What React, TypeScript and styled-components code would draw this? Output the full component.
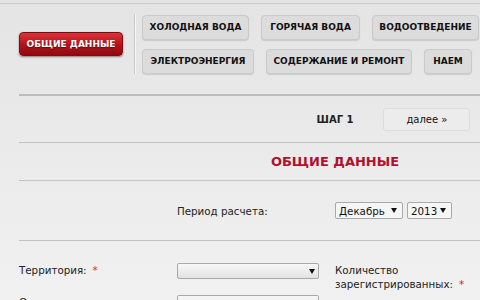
import React from 'react';
import styled, { createGlobalStyle } from 'styled-components';

const GlobalStyle = createGlobalStyle`
  html, body {
    margin: 0;
    padding: 0;
    overflow: hidden;
  }
  body {
    padding-top: 3px;
    background: linear-gradient(#e4e4e4, #f1f1f1 300px);
    font-family: "DejaVu Sans", Verdana, sans-serif;
    color: #222;
  }
`;

const Page = styled.div`
  border-top: 1px solid #cbcbcb;
  width: 651px;
`;

const Header = styled.header`
  display: flex;
  align-items: center;
  padding: 10px 0 20px 19px;
`;

const MainButton = styled.div`
  width: 104px;
  height: 24px;
  box-sizing: border-box;
  display: flex;
  align-items: center;
  justify-content: center;
  border: 1px solid #86090f;
  border-radius: 4px;
  background: linear-gradient(#d9343a, #b3121a 55%, #8e0a10);
  box-shadow: 0 1px 2px rgba(0, 0, 0, 0.45);
  color: #fff;
  font-size: 9px;
  font-weight: bold;
  text-shadow: 0 1px 1px rgba(0, 0, 0, 0.4);
`;

const Separator = styled.div`
  width: 1px;
  height: 60px;
  margin: 0 7px 0 11px;
  background: #c9c9c9;
  box-shadow: 1px 0 0 #f6f6f6;
`;

const Tabs = styled.div`
  display: flex;
  flex-direction: column;
  gap: 9px;
`;

const TabRow = styled.div`
  display: flex;
  gap: 12px;
`;

const Tab = styled.div<{ $w: number }>`
  width: ${(p) => p.$w}px;
  height: 25px;
  box-sizing: border-box;
  display: flex;
  align-items: center;
  justify-content: center;
  border: 1px solid #cacaca;
  border-radius: 4px;
  background: #dcdcdc;
  box-shadow: 0 1px 1px rgba(0, 0, 0, 0.12);
  color: #111;
  font-size: 9px;
  font-weight: bold;
  white-space: nowrap;
`;

const Content = styled.main`
  margin-left: 19px;
  border-top: 2px solid #bdbdbd;
`;

const StepRow = styled.div`
  display: grid;
  grid-template-columns: 1fr auto 1fr;
  align-items: center;
  height: 46px;
  border-bottom: 1px solid #c2c2c2;
`;

const StepLabel = styled.div`
  grid-column: 2;
  font-size: 10px;
  font-weight: bold;
  color: #222;
`;

const NextButton = styled.div`
  margin-left: 30px;
  width: 87px;
  height: 23px;
  box-sizing: border-box;
  display: flex;
  align-items: center;
  justify-content: center;
  border: 1px solid #dcdcdc;
  border-radius: 3px;
  background: #ececec;
  font-size: 10px;
  color: #111;
`;

const Title = styled.h1`
  margin: 0;
  height: 37px;
  display: flex;
  align-items: center;
  justify-content: center;
  border-bottom: 1px solid #c2c2c2;
  color: #b0112d;
  font-size: 13px;
  font-weight: bold;
`;

const FormRow = styled.div<{ $h?: number; $top?: number; $line?: boolean }>`
  display: grid;
  grid-template-columns: repeat(4, 158px);
  align-items: ${(p) => (p.$top !== undefined ? 'start' : 'center')};
  height: ${(p) => p.$h ?? 60}px;
  padding-top: ${(p) => p.$top ?? 0}px;
  box-sizing: border-box;
  border-bottom: ${(p) => (p.$line ? '1px solid #c2c2c2' : 'none')};
`;

const Label = styled.div<{ $col?: number }>`
  grid-column: ${(p) => p.$col ?? 'auto'};
  font-size: 10.3px;
  line-height: 14px;
  color: #222;
`;

const Req = styled.span`
  color: #e8121f;
  margin-left: 6px;
`;

const Selects = styled.div`
  display: flex;
  gap: 4px;
`;

const Select = styled.div<{ $w: number; $plain?: boolean }>`
  width: ${(p) => p.$w}px;
  height: ${(p) => (p.$plain ? 17 : 16)}px;
  box-sizing: border-box;
  display: flex;
  align-items: center;
  justify-content: space-between;
  padding: 0 ${(p) => (p.$plain ? 5 : 3)}px 0 3px;
  border: 1px solid #a9a9a9;
  border-radius: 2px;
  background: ${(p) =>
    p.$plain ? '#f6f6f6' : 'linear-gradient(#f7f7f7, #e2e2e2)'};
  font-size: 10.3px;
  color: #111;
`;

const Arrow = () => (
  <svg width="6" height="5" viewBox="0 0 6 5">
    <path d="M0 0h6L3 5z" fill="#111" />
  </svg>
);

const App = () => {
  return (
    <Page>
      <GlobalStyle />
      <Header>
        <MainButton>ОБЩИЕ ДАННЫЕ</MainButton>
        <Separator />
        <Tabs>
          <TabRow>
            <Tab $w={107}>ХОЛОДНАЯ ВОДА</Tab>
            <Tab $w={99}>ГОРЯЧАЯ ВОДА</Tab>
            <Tab $w={107}>ВОДООТВЕДЕНИЕ</Tab>
          </TabRow>
          <TabRow>
            <Tab $w={112}>ЭЛЕКТРОЭНЕРГИЯ</Tab>
            <Tab $w={146}>СОДЕРЖАНИЕ И РЕМОНТ</Tab>
            <Tab $w={48}>НАЕМ</Tab>
          </TabRow>
        </Tabs>
      </Header>
      <Content>
        <StepRow>
          <StepLabel>ШАГ 1</StepLabel>
          <NextButton>далее »</NextButton>
        </StepRow>
        <Title>ОБЩИЕ ДАННЫЕ</Title>
        <FormRow $line>
          <Label $col={2}>Период расчета:</Label>
          <Selects>
            <Select $w={68} $plain>
              Декабрь <Arrow />
            </Select>
            <Select $w={45} $plain>
              2013 <Arrow />
            </Select>
          </Selects>
        </FormRow>
        <FormRow $h={54} $top={22}>
          <Label>
            Территория:<Req>*</Req>
          </Label>
          <Select $w={142}>
            <span />
            <Arrow />
          </Select>
          <Label>
            Количество
            <br />
            зарегистрированных:<Req>*</Req>
          </Label>
        </FormRow>
        <FormRow $h={40} $top={0}>
          <Label>Округ:</Label>
          <Select $w={142}>
            <span />
            <Arrow />
          </Select>
        </FormRow>
      </Content>
    </Page>
  );
};

export default App;
